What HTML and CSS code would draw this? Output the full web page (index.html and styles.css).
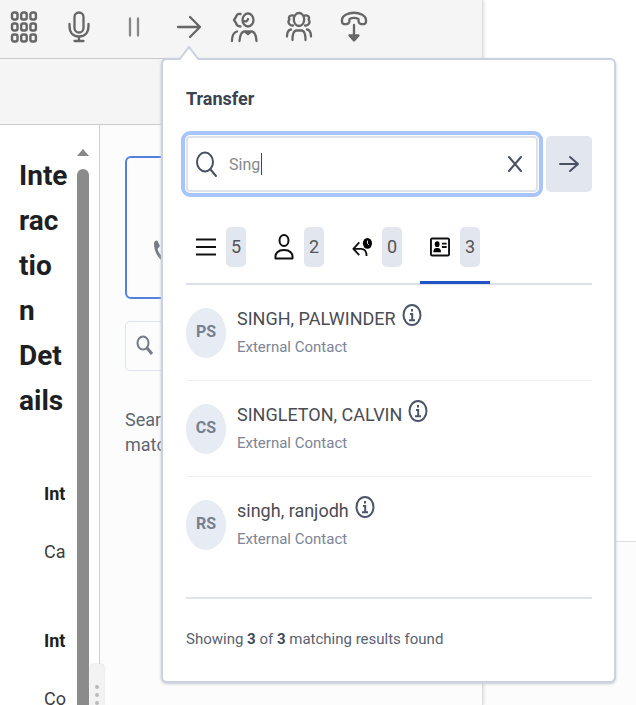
FILE: index.html
```html
<!DOCTYPE html>
<html lang="en">
<head>
<meta charset="utf-8">
<title>Transfer</title>
<link rel="stylesheet" href="styles.css">
</head>
<body>
<div class="page">
  <main class="app">
    <header class="toolbar">
      <button class="tool" aria-label="Dialpad"><svg width="28" height="34" viewBox="0 0 28 34"><g stroke-width="2.4"><rect x="2" y="2.500" width="5.500" height="7" rx="2"/><rect x="11.200" y="2.500" width="5.500" height="7" rx="2"/><rect x="20.400" y="2.500" width="5.500" height="7" rx="2"/><rect x="2" y="13.500" width="5.500" height="7" rx="2"/><rect x="11.200" y="13.500" width="5.500" height="7" rx="2"/><rect x="20.400" y="13.500" width="5.500" height="7" rx="2"/><rect x="2" y="24.500" width="5.500" height="7" rx="2"/><rect x="11.200" y="24.500" width="5.500" height="7" rx="2"/><rect x="20.400" y="24.500" width="5.500" height="7" rx="2"/></g></svg></button>
      <button class="tool" aria-label="Mute"><svg width="28" height="34" viewBox="0 0 28 34"><rect x="9.500" y="2.500" width="9" height="20" rx="4.500"/><path d="M4.500 14v2c0 7 4 10.500 9.500 10.500s9.500-3.500 9.500-10.500v-2M14 27v4M9.500 31h9"/></svg></button>
      <button class="tool" aria-label="Hold"><svg width="28" height="34" viewBox="0 0 28 34"><path d="M10 8.500v17M18 8.500v17" stroke="#888"/></svg></button>
      <button class="tool" aria-label="Transfer"><svg width="28" height="34" viewBox="0 0 28 34"><path d="M3 17h22M15 7l10 10-10 10"/></svg></button>
      <button class="tool" aria-label="Consult"><svg width="28" height="34" viewBox="0 0 28 34"><ellipse cx="18" cy="10" rx="5.500" ry="6.500"/><path d="M10.500 4C8 3.500 6.500 5 6 7L4 10l2 3c.5 2 2 3.500 4.500 3.500M14 11c2 1 3.500 0 4-2M2 31c0-5 1-8.500 5-9.500M9.500 31c.5-6 1.500-9 4.500-9.500h8c3 .5 4 3.500 4.500 9.500M15.500 22l2.500 2 2.500-2z"/></svg></button>
      <button class="tool" aria-label="Conference"><svg width="28" height="34" viewBox="0 0 28 34"><ellipse cx="14" cy="9.500" rx="5.200" ry="6.500"/><path d="M8 5.500C4.500 5 3 7.500 4.500 9.500 2 12 4.500 16 8 15.500M20 5.500c3.500-.5 5 2 3.500 4 2.500 2.500 0 6.500-3.500 6M7.500 30c0-6 1-9 3.500-9.500h6c2.500.5 3.500 3.500 3.500 9.500M2 26.500c0-4 1-6.500 4-7M26 26.500c0-4-1-6.500-4-7"/></svg></button>
      <button class="tool" aria-label="End call"><svg width="28" height="34" viewBox="0 0 28 34"><path d="M2 9.500C3.500.5 24.500.5 26 9.500c.5 5-2 5-5 4.500-2.500-.5-2.500-2-2.500-5-3-1.500-6-1.500-9 0 0 3 0 4.500-2.500 5-3 .5-5.500.5-5-4.500zM14 15v15.500M9.500 25.500l4.500 5 4.500-5z"/></svg></button>
    </header>
    <div class="subbar"></div>
    <div class="panes">
      <section class="details">
        <div class="details-text">
          <h1>Inte<br>rac<br>tio<br>n<br>Det<br>ails</h1>
          <dl>
            <dt>Int</dt><dd>Ca</dd>
            <dt>Int</dt><dd>Co</dd>
          </dl>
        </div>
        <div class="scroll"><span class="scroll-up"></span><span class="thumb"></span></div>
        <div class="grip"><i></i><i></i><i></i></div>
      </section>
      <section class="side">
        <div class="call-card"><svg width="22" height="26" viewBox="0 0 22 26"><path d="M1 5c0-3 3-5 4-2l2 4-2.500 3c1 4 4 7 7 9l3-2 4 4-2 3C8 25 1 14 1 5z" fill="#747c87"/></svg></div>
        <div class="mini-search"><svg width="20" height="24" viewBox="0 0 20 24"><ellipse cx="7" cy="8" rx="5.500" ry="6.500" fill="none" stroke="#747c87" stroke-width="2"/><path d="M11 13l5 6" fill="none" stroke="#747c87" stroke-width="3"/></svg></div>
        <p>Sear<br>matc</p>
      </section>
    </div>
  </main>
  <aside class="beyond"><div class="beyond-top"></div><div class="beyond-bottom"></div></aside>

  <section class="popover" aria-labelledby="popover-title">
    <svg class="pointer" width="22" height="14" viewBox="0 0 22 14"><path d="M1 14L11 1l10 13" fill="#fff" stroke="#cbd1df" stroke-width="2"/></svg>
    <h2 id="popover-title">Transfer</h2>
    <form class="search">
      <div class="field">
        <svg width="24" height="28" viewBox="0 0 24 28"><ellipse cx="10" cy="12" rx="8" ry="9.500"/><path d="M15.500 19.500L21 26"/></svg>
        <div class="entry"><input type="text" value="Sing" aria-label="Search" size="4"><span class="caret"></span></div>
        <button type="button" class="clear" aria-label="Clear"><svg width="14" height="18" viewBox="0 0 14 18"><path d="M1 2l12 14M13 2L1 16"/></svg></button>
      </div>
      <button type="button" class="go" aria-label="Go"><svg width="22" height="20" viewBox="0 0 22 20"><path d="M2 10h18M12 3l8 7-8 7"/></svg></button>
    </form>
    <nav class="tabs">
      <button class="tab" aria-label="All"><svg width="20" height="28" viewBox="0 0 20 28"><path d="M0 6.500h20M0 14h20M0 21.500h20"/></svg><span>5</span></button>
      <button class="tab" aria-label="Agents"><svg width="20" height="28" viewBox="0 0 20 28"><ellipse cx="10" cy="7.500" rx="4.500" ry="5.500"/><path d="M1.500 25.500C1 20 4 17 10 17s9 3 8.500 8.500z"/></svg><span>2</span></button>
      <button class="tab" aria-label="Callbacks"><svg width="20" height="28" viewBox="0 0 22 28"><path d="M8 9l-6.500 7L8 23M2 16h8c4 0 6 3 6 8"/><ellipse cx="17" cy="10" rx="5" ry="6" fill="#000" stroke="none"/><path d="M17 7v3l1.500 1.500" stroke="#fff" stroke-width="1"/></svg><span>0</span></button>
      <button class="tab active" aria-label="External contacts"><svg width="20" height="28" viewBox="0 0 21 28"><rect x="1" y="5" width="19" height="18" rx="1.500"/><g fill="#000" stroke="none"><ellipse cx="7.500" cy="11" rx="2.500" ry="3"/><path d="M3.500 19.500c0-4 2-4.500 4-4.500s4 .5 4 4.500z"/></g><path d="M12.500 10.500h5M12.500 14h5"/></svg><span>3</span></button>
    </nav>
    <ul class="results">
      <li><span class="avatar">PS</span><div><div class="name">SINGH, PALWINDER <svg width="20" height="24" viewBox="0 0 20 24"><ellipse cx="10" cy="12" rx="8.500" ry="10"/><path d="M10 6v2.500M8 11h2.200v6M7 17.200h6"/></svg></div><div class="kind">External Contact</div></div></li>
      <li><span class="avatar">CS</span><div><div class="name">SINGLETON, CALVIN <svg width="20" height="24" viewBox="0 0 20 24"><ellipse cx="10" cy="12" rx="8.500" ry="10"/><path d="M10 6v2.500M8 11h2.200v6M7 17.200h6"/></svg></div><div class="kind">External Contact</div></div></li>
      <li><span class="avatar">RS</span><div><div class="name">singh, ranjodh <svg width="20" height="24" viewBox="0 0 20 24"><ellipse cx="10" cy="12" rx="8.500" ry="10"/><path d="M10 6v2.500M8 11h2.200v6M7 17.200h6"/></svg></div><div class="kind">External Contact</div></div></li>
    </ul>
    <footer>Showing <b>3</b> of <b>3</b> matching results found</footer>
  </section>
</div>
</body>
</html>
```
FILE: styles.css
```css
* { box-sizing: border-box; }
body, h1, h2, p, dl, dd, ul { margin: 0; padding: 0; }
body { font-family: Roboto, sans-serif; color: #3a4350; background: #fff; overflow: hidden; }
button { border: 0; padding: 0; background: none; font: inherit; color: inherit; }
svg { display: block; fill: none; flex: none; }
.page { display: flex; height: 100vh; position: relative; }

.app { width: 76%; display: flex; flex-direction: column; background: #fcfcfc; border-right: 1px solid #ddd; box-shadow: 1px 0 3px #ddd; z-index: 1; }
.toolbar { display: flex; gap: 27px; padding: 10px 10px 14px; background: #f5f5f5; border-bottom: 1px solid #c8c8c8; }
.tool svg { stroke: #666; stroke-width: 2.3; stroke-linecap: round; stroke-linejoin: round; }
.subbar { height: 66px; background: #f5f5f5; border-bottom: 1px solid #ccc; flex: none; }
.panes { display: flex; flex: 1; min-height: 0; overflow: hidden; }

.details { display: flex; width: 100px; flex: none; background: #fff; border-right: 1px solid #d0d0d0; position: relative; }
.details-text { width: 70px; padding: 28px 0 0 19px; color: #1d1f23; }
.details h1 { font-size: 28px; line-height: 45px; font-weight: 700; }
.details dl { padding: 51px 0 0 25px; font-size: 18px; line-height: 40px; }
.details dt { font-weight: 700; }
.details dd { margin: 18px 0 49px; color: #3d3d3d; }
.scroll { width: 22px; margin-left: 2px; padding: 24px 3px 0; display: flex; flex-direction: column; gap: 9px; }
.scroll-up { border: 6px solid transparent; border-top: 0; border-bottom: 7px solid #888; align-self: center; }
.thumb { flex: 1; width: 12px; background: #8b8b8b; border-radius: 6px 6px 0 0; margin: 4px auto 0; }
.grip { position: absolute; left: 90px; bottom: 0; width: 14px; height: 41px; background: #f3f3f3; border-radius: 4px 4px 0 0; box-shadow: 0 0 2px #ccc; display: flex; flex-direction: column; align-items: center; gap: 4px; padding-top: 21px; z-index: 1; }
.grip i { width: 4px; height: 4px; flex: none; border-radius: 50%; background: #bbb; }

.side { flex: 1; padding: 31px 26px 0 25px; font-size: 18px; line-height: 25px; color: #5f6670; }
.call-card { height: 143px; padding: 81px 26px 0; border: 2px solid #5580dc; border-radius: 6px; }
.mini-search { margin: 22px 0 36px; height: 50px; padding: 13px 10px; border: 1px solid #dde2ec; border-radius: 5px; }

.beyond { flex: 1; display: flex; flex-direction: column; }
.beyond-top { flex: 542; }
.beyond-bottom { flex: 163; background: #fcfcfc; border-top: 1px solid #ddd; }

.popover { position: absolute; z-index: 2; top: 58px; left: 161px; right: 20px; padding: 19px 22px 26px 23px; background: #fff; border: 2px solid #cbd1df; border-radius: 6px; box-shadow: 0 1px 3px #c5c8d2; }
.pointer { position: absolute; left: 15px; top: -14px; }
.popover h2 { font-size: 18px; line-height: 40px; font-weight: 700; color: #3a4350; }
.search { display: flex; align-items: center; gap: 8px; margin: 17px 0 35px; }
.field { flex: 1; height: 56px; display: flex; align-items: center; gap: 10px; padding: 0 14px 0 7px; border: 2px solid #dfe2e9; border-radius: 4px; outline: 4px solid #a8c5fb; outline-offset: 1px; }
.field svg, .go svg { stroke: #485063; stroke-width: 2; stroke-linecap: round; stroke-linejoin: round; }
.entry { display: flex; align-items: center; flex: 1; }
.entry input { width: 32px; border: 0; padding: 0; outline: 0; background: none; font: inherit; font-size: 16px; color: #888; }
.caret { width: 1px; height: 22px; background: #444; }
.go { width: 46px; height: 56px; background: #e1e6ef; border-radius: 5px; display: grid; place-items: center; }
.tabs { display: flex; gap: 8px; border-bottom: 2px solid #dce1e9; }
.tab { display: flex; align-items: center; gap: 10px; width: 70px; padding: 0 10px 14px; border-bottom: 3px solid transparent; margin-bottom: -1px; }
.tab.active { border-color: #2253c4; }
.tab svg { stroke: #111; stroke-width: 2; stroke-linejoin: round; }
.tab span { width: 20px; line-height: 40px; background: #e1e6ef; border-radius: 5px; font-size: 18px; text-align: center; color: #555; }
.results { list-style: none; }
.results li { display: flex; gap: 11px; height: 96px; padding-top: 23px; border-bottom: 1px solid #edeff3; }
.results li:last-child { border: 0; }
.avatar { width: 40px; height: 50px; line-height: 48px; border-radius: 50%; background: #e7ebf3; font-size: 16px; font-weight: 700; text-align: center; color: #75808f; }
.name { display: flex; align-items: flex-start; gap: 6px; font-size: 18px; line-height: 22px; color: #4b4d52; }
.name svg { margin-top: -5px; stroke: #4c566b; stroke-width: 2; }
.kind { font-size: 15px; line-height: 24px; margin-top: 5px; color: #7b8594; }
.results div { min-width: 0; }
.results + footer { margin-top: 24px; padding-top: 24px; border-top: 2px solid #dfe3ee; font-size: 15px; line-height: 32px; color: #596170; }
footer b { color: #3f4858; }
```
